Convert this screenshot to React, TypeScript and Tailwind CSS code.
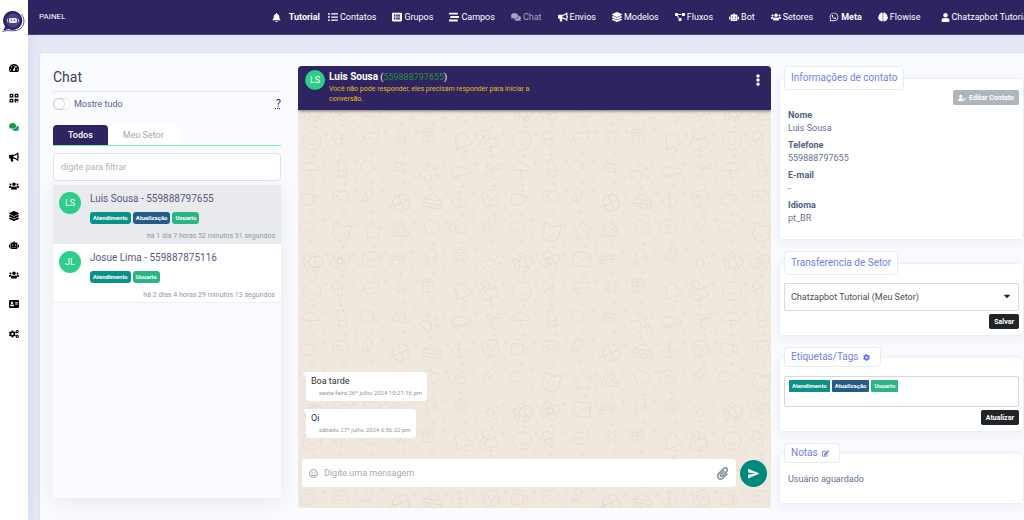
import React, { useState } from 'react';
import {
  FaBell, FaListUl, FaListAlt, FaStream, FaComments, FaBullhorn, FaLayerGroup, FaProjectDiagram,
  FaRobot, FaUsers, FaWhatsapp, FaBrain, FaUser, FaTachometerAlt, FaQrcode, FaAddressCard, FaCogs,
  FaUserEdit, FaCog, FaEdit, FaRegSmile, FaPaperclip, FaEllipsisV, FaCaretDown,
} from 'react-icons/fa';
import { MdSend } from 'react-icons/md';
import {
  Cloud, Star, Heart, Music, Camera, Bell, Fish, Flower, Gift, Pizza, Rocket, Umbrella, Sun, Leaf,
  Smile, Cat, Plane, Car, Anchor, Cake, Coffee, IceCreamCone, Image, Mail, Turtle, Squirrel, Backpack,
  Milk, Sprout, Clover, Search, Gamepad2, PawPrint, Sandwich, Bird,
} from 'lucide-react';

type NavItem = {
  label: string;
  icon: React.ElementType;
  className?: string;
};

type Contact = {
  id: string;
  initials: string;
  name: string;
  phone: string;
  tags: string[];
  lastSeen: string;
};

const navItems: NavItem[] = [
  { label: 'Contatos', icon: FaListUl },
  { label: 'Grupos', icon: FaListAlt },
  { label: 'Campos', icon: FaStream },
  { label: 'Chat', icon: FaComments, className: 'text-[#a7a3c0]' },
  { label: 'Envios', icon: FaBullhorn },
  { label: 'Modelos', icon: FaLayerGroup },
  { label: 'Fluxos', icon: FaProjectDiagram },
  { label: 'Bot', icon: FaRobot },
  { label: 'Setores', icon: FaUsers },
  { label: 'Meta', icon: FaWhatsapp, className: 'font-bold' },
  { label: 'Flowise', icon: FaBrain },
];

const sideItems: NavItem[] = [
  { label: 'Painel', icon: FaTachometerAlt },
  { label: 'QR Code', icon: FaQrcode },
  { label: 'Chat', icon: FaComments, className: 'text-[#15984a]' },
  { label: 'Envios', icon: FaBullhorn },
  { label: 'Grupos', icon: FaUsers },
  { label: 'Modelos', icon: FaLayerGroup },
  { label: 'Bot', icon: FaRobot },
  { label: 'Setores', icon: FaUsers },
  { label: 'Contatos', icon: FaAddressCard },
  { label: 'Ajustes', icon: FaCogs },
];

const contacts: Contact[] = [
  {
    id: '1',
    initials: 'LS',
    name: 'Luis Sousa',
    phone: '559888797655',
    tags: ['Atendimento', 'Atualização', 'Usuario'],
    lastSeen: 'há 1 dia 7 horas 52 minutos 51 segundos',
  },
  {
    id: '2',
    initials: 'JL',
    name: 'Josue Lima',
    phone: '559887875116',
    tags: ['Atendimento', 'Usuario'],
    lastSeen: 'há 2 dias 4 horas 29 minutos 13 segundos',
  },
];

const messages = [
  { id: 1, text: 'Boa tarde', time: 'sexta-feira 26º julho 2024 10:21:16 pm' },
  { id: 2, text: 'Oi', time: 'sábado 27º julho 2024 6:56:22 pm' },
];

const info = [
  { label: 'Nome', value: 'Luis Sousa' },
  { label: 'Telefone', value: '559888797655' },
  { label: 'E-mail', value: '-' },
  { label: 'Idioma', value: 'pt_BR' },
];

const tagColors: Record<string, string> = {
  Atendimento: 'bg-[#0a9289]',
  Atualização: 'bg-[#255c85]',
  Usuario: 'bg-[#2bb585]',
};

const doodles = [
  Cloud, Cat, Star, Pizza, Heart, Camera, Rocket,
  Fish, Flower, Mail, Turtle, Music, Backpack, Sun,
  Smile, IceCreamCone, Leaf, Plane, Gift, Bell, Squirrel,
  Umbrella, Milk, Search, Cake, PawPrint, Car, Sprout,
  Coffee, Gamepad2, Bird, Clover, Sandwich, Anchor, Image,
];

// Wallpaper behind the conversation, a repeating tile of small line drawings
const Wallpaper = () => (
  <svg className="absolute inset-0 w-full h-full text-[#e3dacf]" aria-hidden="true">
    <defs>
      <pattern id="doodles" width="210" height="150" patternUnits="userSpaceOnUse">
        {doodles.map((Doodle, i) => {
          const x = (i % 7) * 30 + ((i * 7) % 5);
          const y = Math.floor(i / 7) * 30 + ((i * 11) % 6);
          const size = 18 + ((i * 5) % 6);
          return (
            <g key={i}>
              <g transform={`translate(${x} ${y}) rotate(${((i * 37) % 50) - 25} 11 11)`}>
                <Doodle width={size} height={size} strokeWidth={1} />
              </g>
              <circle cx={x + 25} cy={y + 4} r="1.3" fill="none" stroke="currentColor" strokeWidth="0.8" />
              <circle cx={x + 24} cy={y + 21} r="1" fill="none" stroke="currentColor" strokeWidth="0.8" />
              <path d={`M${x + 13} ${y + 24}v4m-2-2h4`} stroke="currentColor" strokeWidth="0.8" />
            </g>
          );
        })}
      </pattern>
    </defs>
    <rect width="100%" height="100%" fill="url(#doodles)" />
  </svg>
);

const Logo = () => (
  <svg className="w-6 h-6" viewBox="0 0 24 24" fill="none">
    <path d="M19.500 4c5 7 2 15-5 16.500-5 1-8-1-14 1" stroke="#5f5790" strokeWidth="1" />
    <path d="M11 1a9.500 9.500 0 1 1-4.500 18c-2 1-3.500 1.300-5.500 1.300 1-1 2-2.300 1.800-4.300A9.500 9.500 0 0 1 11 1z" fill="#2e2462" />
    <circle cx="11" cy="10.500" r="7" fill="#4b4285" />
    <rect x="7" y="8" width="8" height="5" rx="1.500" fill="#e9e7f5" />
    <path d="M5.500 9v3M16.500 9v3" stroke="#b9b4da" strokeWidth="1" />
    <circle cx="9.500" cy="10.300" r="0.700" fill="#4b4285" />
    <circle cx="12.500" cy="10.300" r="0.700" fill="#4b4285" />
  </svg>
);

const Avatar = ({ initials, className }: { initials: string; className: string }) => (
  <span className={`flex items-center justify-center shrink-0 rounded-full bg-[#2dce89] text-white ${className}`}>
    {initials}
  </span>
);

const Tag = ({ name, className }: { name: string; className: string }) => (
  <span className={`px-[3px] h-3 leading-3 text-[6px] font-bold text-white ${tagColors[name]} ${className}`}>
    {name}
  </span>
);

const Panel = ({ title, icon, children }: { title: string; icon?: React.ReactNode; children: React.ReactNode }) => (
  <fieldset className="min-w-0 px-1 bg-white border border-[#eceef3] rounded-sm shadow-[0_2px_12px_rgba(60,60,100,0.08)]">
    <legend
      className={`flex items-center gap-1 pl-1.5 bg-white border border-[#e9ecef] rounded text-[10px] text-[#7480e8] ${icon ? 'h-5 pr-2.5' : 'h-6 pr-1.5'}`}
    >
      {title}
      {icon}
    </legend>
    {children}
  </fieldset>
);

const App: React.FC = () => {
  const [showAll, setShowAll] = useState(false);
  const [activeTab, setActiveTab] = useState('Todos');
  const [selectedId, setSelectedId] = useState('1');

  return (
    <div className="flex min-h-screen overflow-hidden bg-[#e5e9f6] font-[Roboto,sans-serif] text-[9px] leading-3">
      <aside className="flex flex-col items-center w-7 shrink-0 bg-white shadow-[0_0_16px_rgba(90,110,190,0.15)]">
        <a href="#" className="mt-2.5" aria-label="Início">
          <Logo />
        </a>
        <nav className="flex flex-col justify-between h-[276px] mt-[29px]">
          {sideItems.map(({ label, icon: Icon, className }) => (
            <a key={label} href="#" aria-label={label} className={`flex items-center h-[10px] ${className ?? 'text-black'}`}>
              <Icon className="w-[10px] h-[10px]" />
            </a>
          ))}
        </nav>
      </aside>

      <div className="flex flex-col flex-1 min-w-0">
        <header className="flex items-center h-[35px] pl-[11px] bg-[#2e2462] border-b border-[#4a4279] text-white whitespace-nowrap overflow-hidden">
          <a href="#" className="text-[8px]">PAINEL</a>
          <nav className="flex items-center gap-4 ml-auto -mr-1.5">
            <div className="flex items-center gap-2">
              <button type="button" aria-label="Notificações"><FaBell className="w-[9px] h-[9px]" /></button>
              <a href="#" className="font-bold">Tutorial</a>
              <a href="#" className="flex items-center gap-0.5">
                <FaListUl className="w-[10px] h-[10px]" />
                Contatos
              </a>
            </div>
            {navItems.slice(1).map(({ label, icon: Icon, className }) => (
              <a key={label} href="#" className={`flex items-center gap-0.5 ${className ?? ''}`}>
                <Icon className="w-[10px] h-[10px]" />
                {label}
              </a>
            ))}
            <a href="#" className="flex items-center gap-0.5 ml-1">
              <FaUser className="w-[9px] h-[9px]" />
              Chatzapbot Tutorial
            </a>
          </nav>
        </header>

        <main className="flex flex-1 mt-[17px] ml-[11px] pt-[13px] pl-[13px] bg-[#fafbff] border-l border-t border-[#dfe2ec] rounded-tl">
          {/* Conversation list */}
          <section className="flex flex-col w-[228px] shrink-0">
            <h1 className="h-[26px] pt-[3px] text-[14px] leading-4 text-[#3f3a66] border-b border-[#e4e6ee]">Chat</h1>
            <div className="flex items-center justify-between h-6 text-[#5a628c]">
              <label className="flex items-center gap-[3px]">
                <input
                  type="checkbox"
                  checked={showAll}
                  onChange={() => setShowAll(!showAll)}
                  className="appearance-none w-[18px] h-3 rounded-full bg-white border border-[#e6e8ee] before:block before:w-2.5 before:h-2.5 before:rounded-full before:bg-white before:shadow-[0_0_2px_rgba(0,0,0,0.5)] checked:before:ml-1.5"
                />
                Mostre tudo
              </label>
              <abbr title="Ajuda" className="text-[11px] text-[#2e2462]">?</abbr>
            </div>
            <div className="flex mt-[9px] border-b border-green-300">
              {['Todos', 'Meu Setor'].map((tab) => (
                <button
                  key={tab}
                  type="button"
                  onClick={() => setActiveTab(tab)}
                  className={`h-5 px-[15px] rounded-t ${activeTab === tab ? 'bg-[#2e2462] text-white font-medium' : 'bg-white text-[#a4a9b5]'}`}
                >
                  {tab}
                </button>
              ))}
            </div>
            <input
              type="text"
              aria-label="Filtrar"
              placeholder="digite para filtrar"
              className="h-7 mt-[7px] px-[7px] bg-white border border-[#dee2e9] rounded-sm placeholder:text-[#adb5bd] outline-none"
            />
            <div className="h-[313px] mt-1 shadow-[0_4px_20px_rgba(0,0,0,0.08)]">
              {contacts.map((contact) => (
                <button
                  key={contact.id}
                  type="button"
                  onClick={() => setSelectedId(contact.id)}
                  className={`flex w-full h-[59px] gap-[9px] px-1.5 pt-[7px] text-left border-b border-[#eceef2] ${selectedId === contact.id ? 'bg-[#e9eaee]' : 'bg-white'}`}
                >
                  <Avatar initials={contact.initials} className="w-[22px] h-[22px] text-[9px]" />
                  <div className="flex flex-col flex-1">
                    <span className="text-[10px] leading-[14px] text-[#5c5781]">{contact.name} - {contact.phone}</span>
                    <span className="flex gap-0.5 mt-1.5">
                      {contact.tags.map((tag) => <Tag key={tag} name={tag} className="rounded-[3px]" />)}
                    </span>
                    <span className="mt-2 text-[7px] leading-2 text-right text-[#8d97ae]">{contact.lastSeen}</span>
                  </div>
                </button>
              ))}
            </div>
          </section>

          {/* Open conversation */}
          <section className="relative flex flex-col flex-1 min-w-0 h-[442px] ml-[17px] bg-[#f0e8df] rounded-sm overflow-hidden">
            <Wallpaper />
            <header className="relative flex h-11 px-[7px] pt-1 gap-1 bg-[#2e2462] text-white shadow-[0_1px_3px_rgba(0,0,0,0.5)]">
              <Avatar initials="LS" className="w-5 h-5 text-[9px]" />
              <div className="flex-1">
                <p className="leading-[14px]">
                  <strong className="text-[10px]">Luis Sousa</strong> (<span className="text-[#23923d]">559888797655</span>)
                </p>
                <p className="max-w-[212px] text-[7px] leading-[10px] text-[#e6bd12]">
                  Você não pode responder, eles precisam responder para iniciar a conversão.
                </p>
              </div>
              <button type="button" aria-label="Opções" className="self-start mt-1"><FaEllipsisV className="w-3 h-3" /></button>
            </header>
            <div className="relative flex flex-col items-start justify-end flex-1 gap-2 px-1 pb-[21px]">
              {messages.map((message) => (
                <div key={message.id} className="flex">
                  <svg className="w-1 h-1" viewBox="0 0 4 4"><path d="M0 0h4v4z" fill="#fff" /></svg>
                  <div className="h-[29px] px-[5px] pt-[3px] bg-white rounded-sm rounded-tl-none text-[#303030]">
                    <p>{message.text}</p>
                    <p className="pl-2 text-[6px] text-[#999]">{message.time}</p>
                  </div>
                </div>
              ))}
            </div>
            <form className="relative flex items-center gap-1 mx-1 mb-[21px]" onSubmit={(e) => e.preventDefault()}>
              <div className="flex items-center flex-1 gap-1.5 h-7 px-[7px] bg-white rounded-sm">
                <FaRegSmile className="w-[9px] h-[9px] text-[#8b9096]" />
                <input
                  type="text"
                  aria-label="Mensagem"
                  placeholder="Digite uma mensagem"
                  className="flex-1 min-w-0 placeholder:text-[#aaa] outline-none"
                />
                <button type="button" aria-label="Anexar" className="text-[#8496a8]"><FaPaperclip className="w-[13px] h-[13px]" /></button>
              </div>
              <button type="submit" aria-label="Enviar" className="flex items-center justify-center w-[27px] h-[27px] rounded-full bg-[#008a7c] text-white">
                <MdSend className="w-[13px] h-[13px]" />
              </button>
            </form>
          </section>

          {/* Contact details */}
          <aside className="flex flex-col gap-[11px] w-[245px] shrink-0 ml-2 text-[#68718f]">
            <Panel title="Informações de contato">
              <div className="flex justify-end">
                <button type="button" className="flex items-center gap-[3px] h-[15px] px-[5px] rounded-xs bg-[#adb5bd] text-white text-[7px] font-bold">
                  <FaUserEdit className="w-2 h-2" />
                  Editar Contato
                </button>
              </div>
              <dl className="px-1 pt-1 pb-2.5">
                {info.map(({ label, value }) => (
                  <div key={label} className="mb-1">
                    <dt className="leading-[13px] font-bold text-[#525f7f]">{label}</dt>
                    <dd className="leading-[13px]">{value}</dd>
                  </div>
                ))}
              </dl>
            </Panel>

            <Panel title="Transferencia de Setor">
              <div className="relative mt-2">
                <select
                  aria-label="Setor"
                  className="appearance-none w-full h-7 px-1.5 bg-white border border-[#dcdcdf] rounded-xs text-[#495057] outline-none"
                >
                  <option>Chatzapbot Tutorial (Meu Setor)</option>
                </select>
                <FaCaretDown className="absolute right-2 top-2 w-2 h-[10px] text-[#212529] pointer-events-none" />
              </div>
              <div className="flex justify-end pt-[3px] pb-1.5">
                <button type="button" className="h-[15px] px-[5px] rounded-xs bg-[#212529] text-white text-[7px] font-bold">Salvar</button>
              </div>
            </Panel>

            <Panel title="Etiquetas/Tags" icon={<FaCog className="w-[7px] h-[7px] text-[#5e72e4]" />}>
              <div className="flex items-start gap-0.5 h-[31px] mt-[9px] px-1 pt-[3px] border border-[#d5d7db] rounded-xs">
                {contacts[0].tags.map((tag) => <Tag key={tag} name={tag} className="rounded-[1px]" />)}
              </div>
              <div className="flex justify-end pt-[3px] pb-1.5">
                <button type="button" className="h-[15px] px-[5px] rounded-xs bg-[#212529] text-white text-[7px] font-bold">Atualizar</button>
              </div>
            </Panel>

            <Panel title="Notas" icon={<FaEdit className="w-[7px] h-[7px] text-[#5e72e4]" />}>
              <p className="px-1 pt-2.5 pb-[18px]">Usuário aguardado</p>
            </Panel>
          </aside>
        </main>
      </div>
    </div>
  );
};

export default App;
